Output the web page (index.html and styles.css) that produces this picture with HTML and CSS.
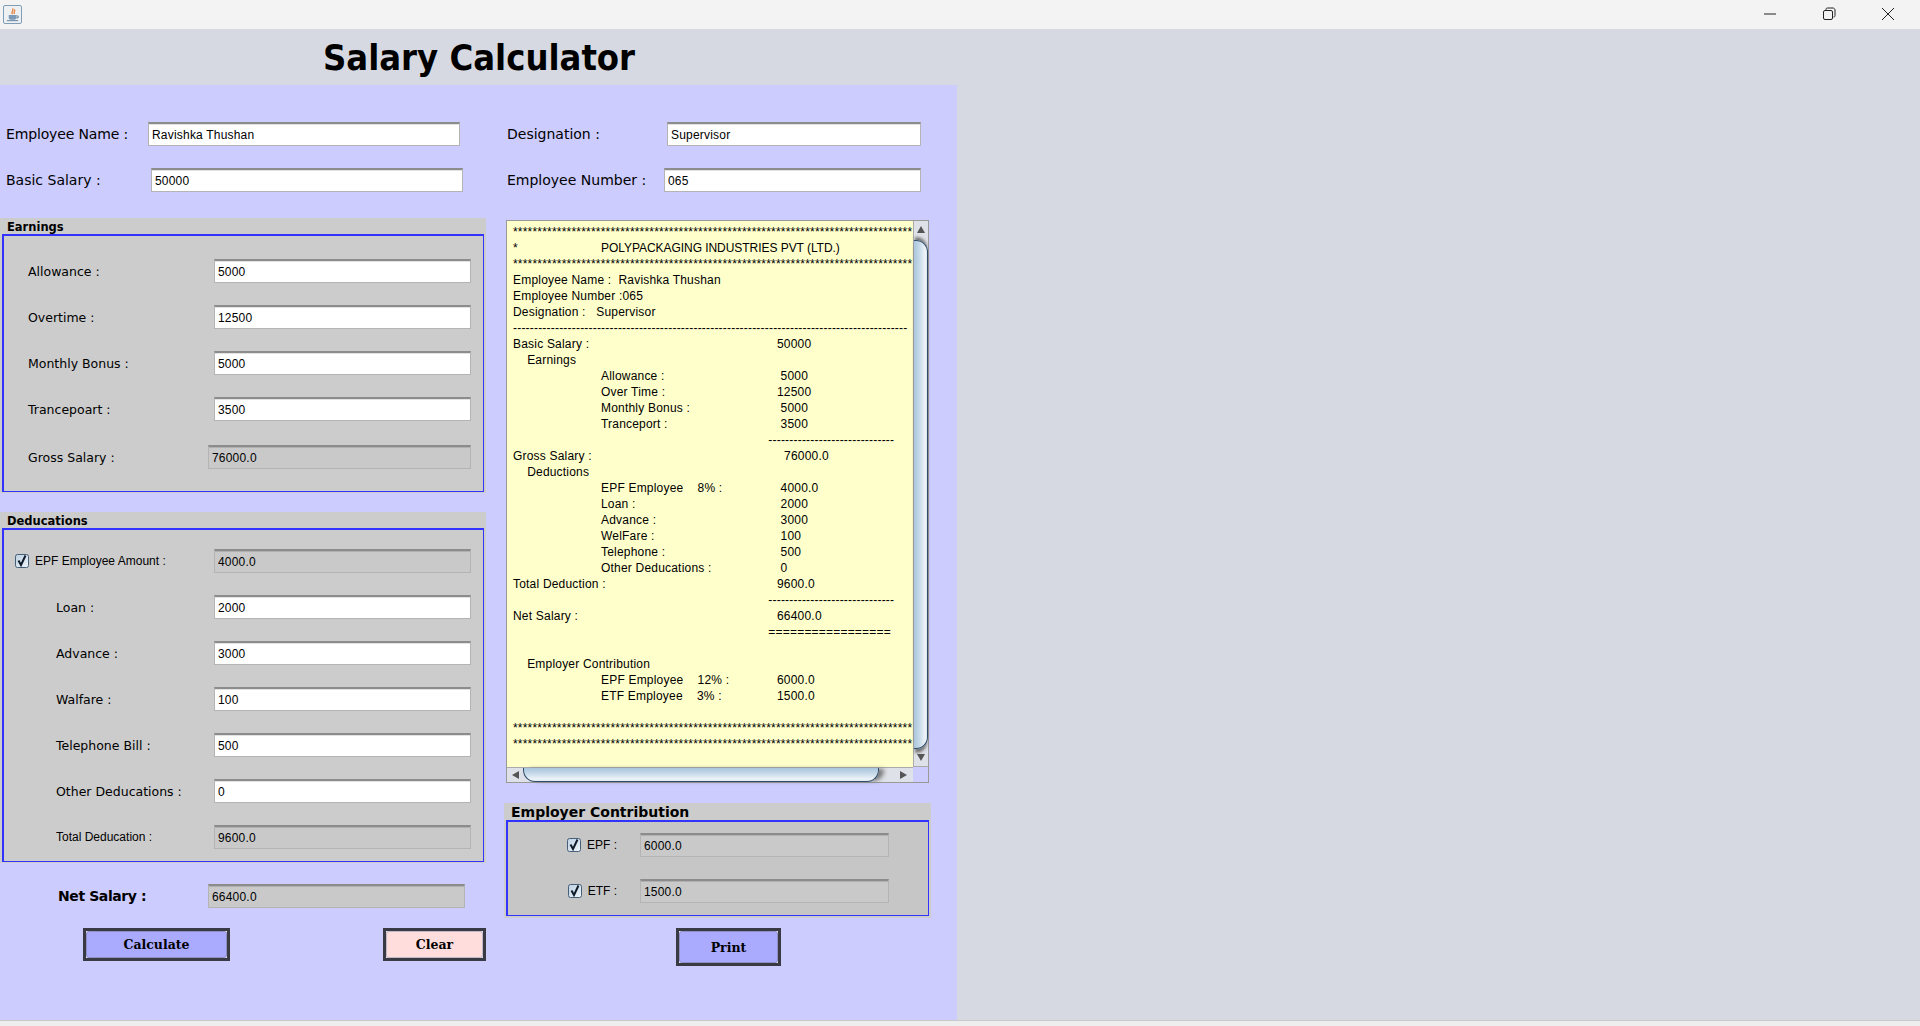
FILE: index.html
```html
<!DOCTYPE html>
<html lang="en">
<head>
  <meta charset="UTF-8"/>
  <title>Salary Calculator</title>
  <link rel="stylesheet" href="styles.css">
</head>
<body>
  <div class="titlebar">
    <span class="app-icon">
      <svg width="18" height="18" viewBox="0 0 18 18"><path d="M9 2c2 2-2 3 0 6M11 3c1 2-1 3 0 5" fill="none" stroke="#e8894a" stroke-width="1.5"/><path d="M5 9h8v3c0 1.500-1 2-2 2H7c-1 0-2-.5-2-2z" fill="#7c9ab8"/><path d="M13 10h2v2h-2M3 15h12" fill="none" stroke="#5d7d9c"/></svg>
    </span>
    <div class="win-buttons">
      <svg width="14" height="14" viewBox="0 0 14 14"><path d="M1 7h12" stroke="#222" fill="none"/></svg>
      <svg width="14" height="14" viewBox="0 0 14 14"><rect x="1.500" y="3.500" width="9" height="9" rx="1.500" fill="none" stroke="#222"/><path d="M4 3V2.500C4 1.500 4.500 1 5.500 1H11c1 0 2 1 2 2v5.500c0 1-.5 1.500-1.500 1.500" fill="none" stroke="#222"/></svg>
      <svg width="14" height="14" viewBox="0 0 14 14"><path d="M1 1l12 12M13 1L1 13" stroke="#222" fill="none"/></svg>
    </div>
  </div>

  <div class="heading"><h1>Salary Calculator</h1></div>

  <div class="form">
    <div class="col-left">
      <div class="top-row name-row">
        <label>Employee Name :</label>
        <input type="text" value="Ravishka Thushan">
      </div>
      <div class="top-row basic-row">
        <label>Basic Salary :</label>
        <input type="text" value="50000">
      </div>

      <section class="group earnings">
        <h3>Earnings</h3>
        <div class="group-body">
          <div class="row"><label>Allowance :</label><input type="text" value="5000"></div>
          <div class="row"><label>Overtime :</label><input type="text" value="12500"></div>
          <div class="row"><label>Monthly Bonus :</label><input type="text" value="5000"></div>
          <div class="row"><label>Trancepoart :</label><input type="text" value="3500"></div>
          <div class="row gross-row"><label>Gross Salary :</label><input type="text" class="off" value="76000.0" readonly></div>
        </div>
      </section>

      <section class="group deductions">
        <h3>Deducations</h3>
        <div class="group-body">
          <div class="row epf-row">
            <label class="check">
              <svg width="14" height="14" viewBox="0 0 14 14"><defs><linearGradient id="box" x1="0" y1="0" x2="1" y2="1"><stop offset="0" stop-color="#bcd0e2"/><stop offset="1" stop-color="#f0f5f9"/></linearGradient></defs><rect x=".5" y=".5" width="13" height="13" rx="2" fill="url(#box)" stroke="#465f78"/><path d="M3.500 6.500l2.500 4.500 4.500-9.500" fill="none" stroke="#101c2a" stroke-width="2"/></svg>
              EPF Employee Amount :
            </label>
            <input type="text" class="off" value="4000.0" readonly>
          </div>
          <div class="row"><label>Loan :</label><input type="text" value="2000"></div>
          <div class="row"><label>Advance :</label><input type="text" value="3000"></div>
          <div class="row"><label>Walfare :</label><input type="text" value="100"></div>
          <div class="row"><label>Telephone Bill :</label><input type="text" value="500"></div>
          <div class="row"><label>Other Deducations :</label><input type="text" value="0"></div>
          <div class="row total-row"><label>Total Deducation :</label><input type="text" class="off" value="9600.0" readonly></div>
        </div>
      </section>

      <div class="net-row">
        <label>Net Salary :</label>
        <input type="text" class="off" value="66400.0" readonly>
      </div>

      <div class="buttons">
        <button class="btn-calc">Calculate</button>
        <button class="btn-clear">Clear</button>
      </div>
    </div>

    <div class="col-right">
      <div class="top-row desig-row">
        <label>Designation :</label>
        <input type="text" value="Supervisor">
      </div>
      <div class="top-row number-row">
        <label>Employee Number :</label>
        <input type="text" value="065">
      </div>

      <div class="report">
        <div class="report-text">
          <pre>**********************************************************************************</pre>
          <pre class="company">*		POLYPACKAGING INDUSTRIES PVT (LTD.)</pre>
          <pre>**********************************************************************************
Employee Name :  Ravishka Thushan
Employee Number :065
Designation :   Supervisor
----------------------------------------------------------------------------------------------
Basic Salary :					50000
    Earnings
		Allowance :			 5000
		Over Time :			12500
		Monthly Bonus :		 5000
		Tranceport :			 3500
					          ------------------------------
Gross Salary :					  76000.0
    Deductions
		EPF Employee    8% :		 4000.0
		Loan :				 2000
		Advance :			 3000
		WelFare :			 100
		Telephone :			 500
		Other Deducations :		 0
Total Deduction :				9600.0
					          ------------------------------
Net Salary :					66400.0
					          =================

    Employer Contribution
		EPF Employee    12% :		6000.0
		ETF Employee    3% :		1500.0

**********************************************************************************
**********************************************************************************</pre>
        </div>
        <div class="vbar">
          <span class="arrow up"></span>
          <span class="vthumb"></span>
          <span class="arrow down"></span>
        </div>
        <div class="hbar">
          <span class="arrow left"></span>
          <span class="hthumb"></span>
          <span class="arrow right"></span>
        </div>
        <div class="corner"></div>
      </div>

      <section class="group employer">
        <h3>Employer Contribution</h3>
        <div class="group-body">
          <div class="row">
            <label class="check">
              <svg width="14" height="14" viewBox="0 0 14 14"><rect x=".5" y=".5" width="13" height="13" rx="2" fill="url(#box)" stroke="#465f78"/><path d="M3.500 6.500l2.500 4.500 4.500-9.500" fill="none" stroke="#101c2a" stroke-width="2"/></svg>
              EPF :
            </label>
            <input type="text" class="off" value="6000.0" readonly>
          </div>
          <div class="row">
            <label class="check">
              <svg width="14" height="14" viewBox="0 0 14 14"><rect x=".5" y=".5" width="13" height="13" rx="2" fill="url(#box)" stroke="#465f78"/><path d="M3.500 6.500l2.500 4.500 4.500-9.500" fill="none" stroke="#101c2a" stroke-width="2"/></svg>
              ETF :
            </label>
            <input type="text" class="off" value="1500.0" readonly>
          </div>
        </div>
      </section>

      <button class="btn-print">Print</button>
    </div>
  </div>

  <div class="footer"></div>
</body>
</html>
```

FILE: styles.css
```css
* {
  box-sizing: border-box;
}

body {
  margin: 0;
  height: 1026px;
  overflow: hidden;
  background: #d6d9e1;
  font-family: "DejaVu Sans", sans-serif;
  color: #000;
}

.titlebar {
  height: 29px;
  background: #f3f3f3;
  display: flex;
  align-items: center;
  justify-content: space-between;
}

.app-icon {
  width: 19px;
  height: 19px;
  margin-left: 3px;
  border: 1px solid #7f9db5;
  border-radius: 2px;
  background: #eef1f4;
  display: flex;
}

.win-buttons {
  display: flex;
  gap: 45px;
  padding-right: 25px;
  margin-top: -1px;
}

.heading {
  height: 56px;
  padding-left: 323px;
}

h1 {
  margin: 0;
  font-family: "DejaVu Sans Condensed", "DejaVu Sans", sans-serif;
  font-size: 36px;
  font-weight: bold;
  line-height: 58px;
  white-space: nowrap;
}

.form {
  width: 957px;
  height: 935px;
  background: #ccccff;
  display: flex;
}

.col-left {
  width: 486px;
  padding-top: 37px;
}

.col-right {
  width: 427px;
  margin-left: 18px;
  padding-top: 37px;
}

input {
  height: 24px;
  width: 257px;
  padding: 1px 3px 0;
  border: 1px solid #b4b4b4;
  border-top: 2px solid #8c8c8c;
  box-shadow: inset 0 1px 0 #e2e2e2;
  border-radius: 0;
  background: #fff;
  outline: none;
  font-family: "Liberation Sans", sans-serif;
  font-size: 12px;
  letter-spacing: .2px;
  color: #000;
}

input.off {
  background: #c9c9c9;
  box-shadow: inset 0 1px 0 #b0b0b0;
}

.top-row {
  display: flex;
  align-items: center;
  height: 24px;
  margin-bottom: 22px;
}

.top-row label {
  font-size: 14px;
}

.col-left .top-row {
  padding-left: 6px;
}

.col-right .top-row {
  padding-left: 3px;
}

.name-row label { width: 142px; letter-spacing: -.15px; }
.name-row input { width: 312px; }
.basic-row label { width: 145px; }
.basic-row input { width: 312px; }
.desig-row label { width: 160px; }
.desig-row input { width: 254px; }
.number-row label { width: 157px; }

.group {
  background: #cccccc;
}

.group h3 {
  margin: 0;
  height: 16px;
  padding-left: 7px;
  font-size: 11.500px;
  line-height: 18px;
  font-weight: bold;
}

.group-body {
  margin: 0 2px;
  border: 1px solid #3333ff;
  border-top-width: 2px;
  border-left-width: 2px;
  display: flex;
  flex-direction: column;
  gap: 22px;
}

.row {
  display: flex;
  align-items: center;
  height: 24px;
  padding-right: 12px;
}

.row label {
  flex: 1;
  font-size: 12.500px;
}

.earnings {
  height: 275px;
  margin-top: 26px;
}

.earnings .group-body {
  height: 258px;
  padding-top: 23px;
}

.earnings .row {
  padding-left: 24px;
}

.gross-row {
  margin-top: 2px;
}

.gross-row input {
  width: 263px;
}

.deductions {
  height: 351px;
  margin-top: 19px;
}

.deductions .group-body {
  height: 334px;
  padding-top: 19px;
}

.deductions .row {
  padding-left: 52px;
}

.deductions .epf-row {
  padding-left: 11px;
}

.row.total-row label {
  font-family: "Liberation Sans", sans-serif;
  font-size: 12px;
}

.row .check {
  display: flex;
  align-items: center;
  gap: 6px;
  font-family: "Liberation Sans", sans-serif;
  font-size: 12px;
}

.net-row {
  display: flex;
  align-items: center;
  height: 24px;
  margin-top: 21px;
  padding-left: 58px;
}

.net-row label {
  width: 150px;
  font-size: 14px;
  font-weight: bold;
  letter-spacing: -.4px;
}

.buttons {
  display: flex;
  margin-top: 20px;
  padding-left: 83px;
}

button {
  position: relative;
  z-index: 0;
  height: 33px;
  padding: 0;
  border: 3px solid #3a3a44;
  border-radius: 0;
  background: #dfe0ee;
  font-family: "DejaVu Serif", serif;
  font-size: 12.500px;
  font-weight: bold;
  color: #000;
}

/* rounded inner face, the corners of the button stay light */
button::before {
  content: "";
  position: absolute;
  inset: 0;
  z-index: -1;
  border-radius: 3px;
  border: 1px solid #8f8fc4;
  background: #aaaaff;
}

.btn-calc {
  width: 147px;
}

.btn-clear {
  width: 103px;
  margin-left: 153px;
}

.btn-clear::before {
  background: #ffdddd;
  border-color: #c0b8c8;
}

.btn-print {
  display: block;
  width: 105px;
  height: 38px;
  margin: 10px 0 0 172px;
}

.report {
  width: 423px;
  height: 563px;
  margin: 28px 0 0 2px;
  border: 1px solid #999;
  display: grid;
  grid-template-columns: 406px 15px;
  grid-template-rows: 546px 15px;
}

.report-text {
  padding: 3px 0 0 6px;
  overflow: hidden;
  background: #ffffcc;
}

.report-text pre {
  margin: 0;
  font-family: "Liberation Sans", sans-serif;
  font-size: 12px;
  letter-spacing: .2px;
  line-height: 16px;
  tab-size: 44px;
}

.report-text .company {
  letter-spacing: -.05px;
}

.vbar {
  background: #dfe1e8;
  border-left: 1px solid #aaa;
  border-bottom: 1px solid #aaa;
  display: flex;
  flex-direction: column;
  align-items: center;
}

.hbar {
  background: #dfe1e8;
  border-top: 1px solid #aaa;
  display: flex;
  align-items: center;
}

.corner {
  background: #ccccff;
}

.vthumb {
  flex: 1;
  width: 100%;
  margin: 7px 0 5px;
  border: solid #2f4d6b;
  border-width: 1px 1px 1px 0;
  border-radius: 0 12px 12px 0;
  background: linear-gradient(90deg, #a9c5dc, #c4d8e8 40%, #eef4f8 85%, #dfe8ef);
  box-shadow: 0 -4px 3px -1px #777, 0 5px 3px -1px #777;
}

.hthumb {
  width: 356px;
  height: 100%;
  margin: 0 20px 0 4px;
  border: solid #2f4d6b;
  border-width: 0 1px 1px 1px;
  border-radius: 0 0 12px 12px;
  background: linear-gradient(180deg, #a9c5dc, #c4d8e8 40%, #eef4f8 85%, #dfe8ef);
  box-shadow: 6px 0 4px -1px #777;
}

.arrow {
  flex: none;
  width: 0;
  height: 0;
  border: 4px solid transparent;
}

.arrow.up {
  margin-top: 5px;
  border-top-width: 0;
  border-bottom: 7px solid #555;
}

.arrow.down {
  margin-bottom: 5px;
  border-bottom-width: 0;
  border-top: 7px solid #555;
}

.arrow.left {
  margin-left: 5px;
  margin-right: 0;
  border-left-width: 0;
  border-right: 7px solid #555;
}

.arrow.right {
  margin-left: 1px;
  border-right-width: 0;
  border-left: 7px solid #555;
}

.employer {
  height: 115px;
  width: 427px;
  margin-top: 20px;
}

.employer h3 {
  height: 17px;
  padding-left: 7px;
  font-size: 14px;
  line-height: 19px;
}

.employer .group-body {
  height: 96px;
  padding-top: 11px;
  background: #c6c6c6;
}

.employer .row {
  padding-right: 39px;
}

.employer input {
  width: 249px;
}

.employer .check {
  justify-content: flex-end;
  margin-right: 23px;
}

.footer {
  height: 6px;
  background: #eeeeee;
  border-top: 1px solid #c8c8c8;
}
```
